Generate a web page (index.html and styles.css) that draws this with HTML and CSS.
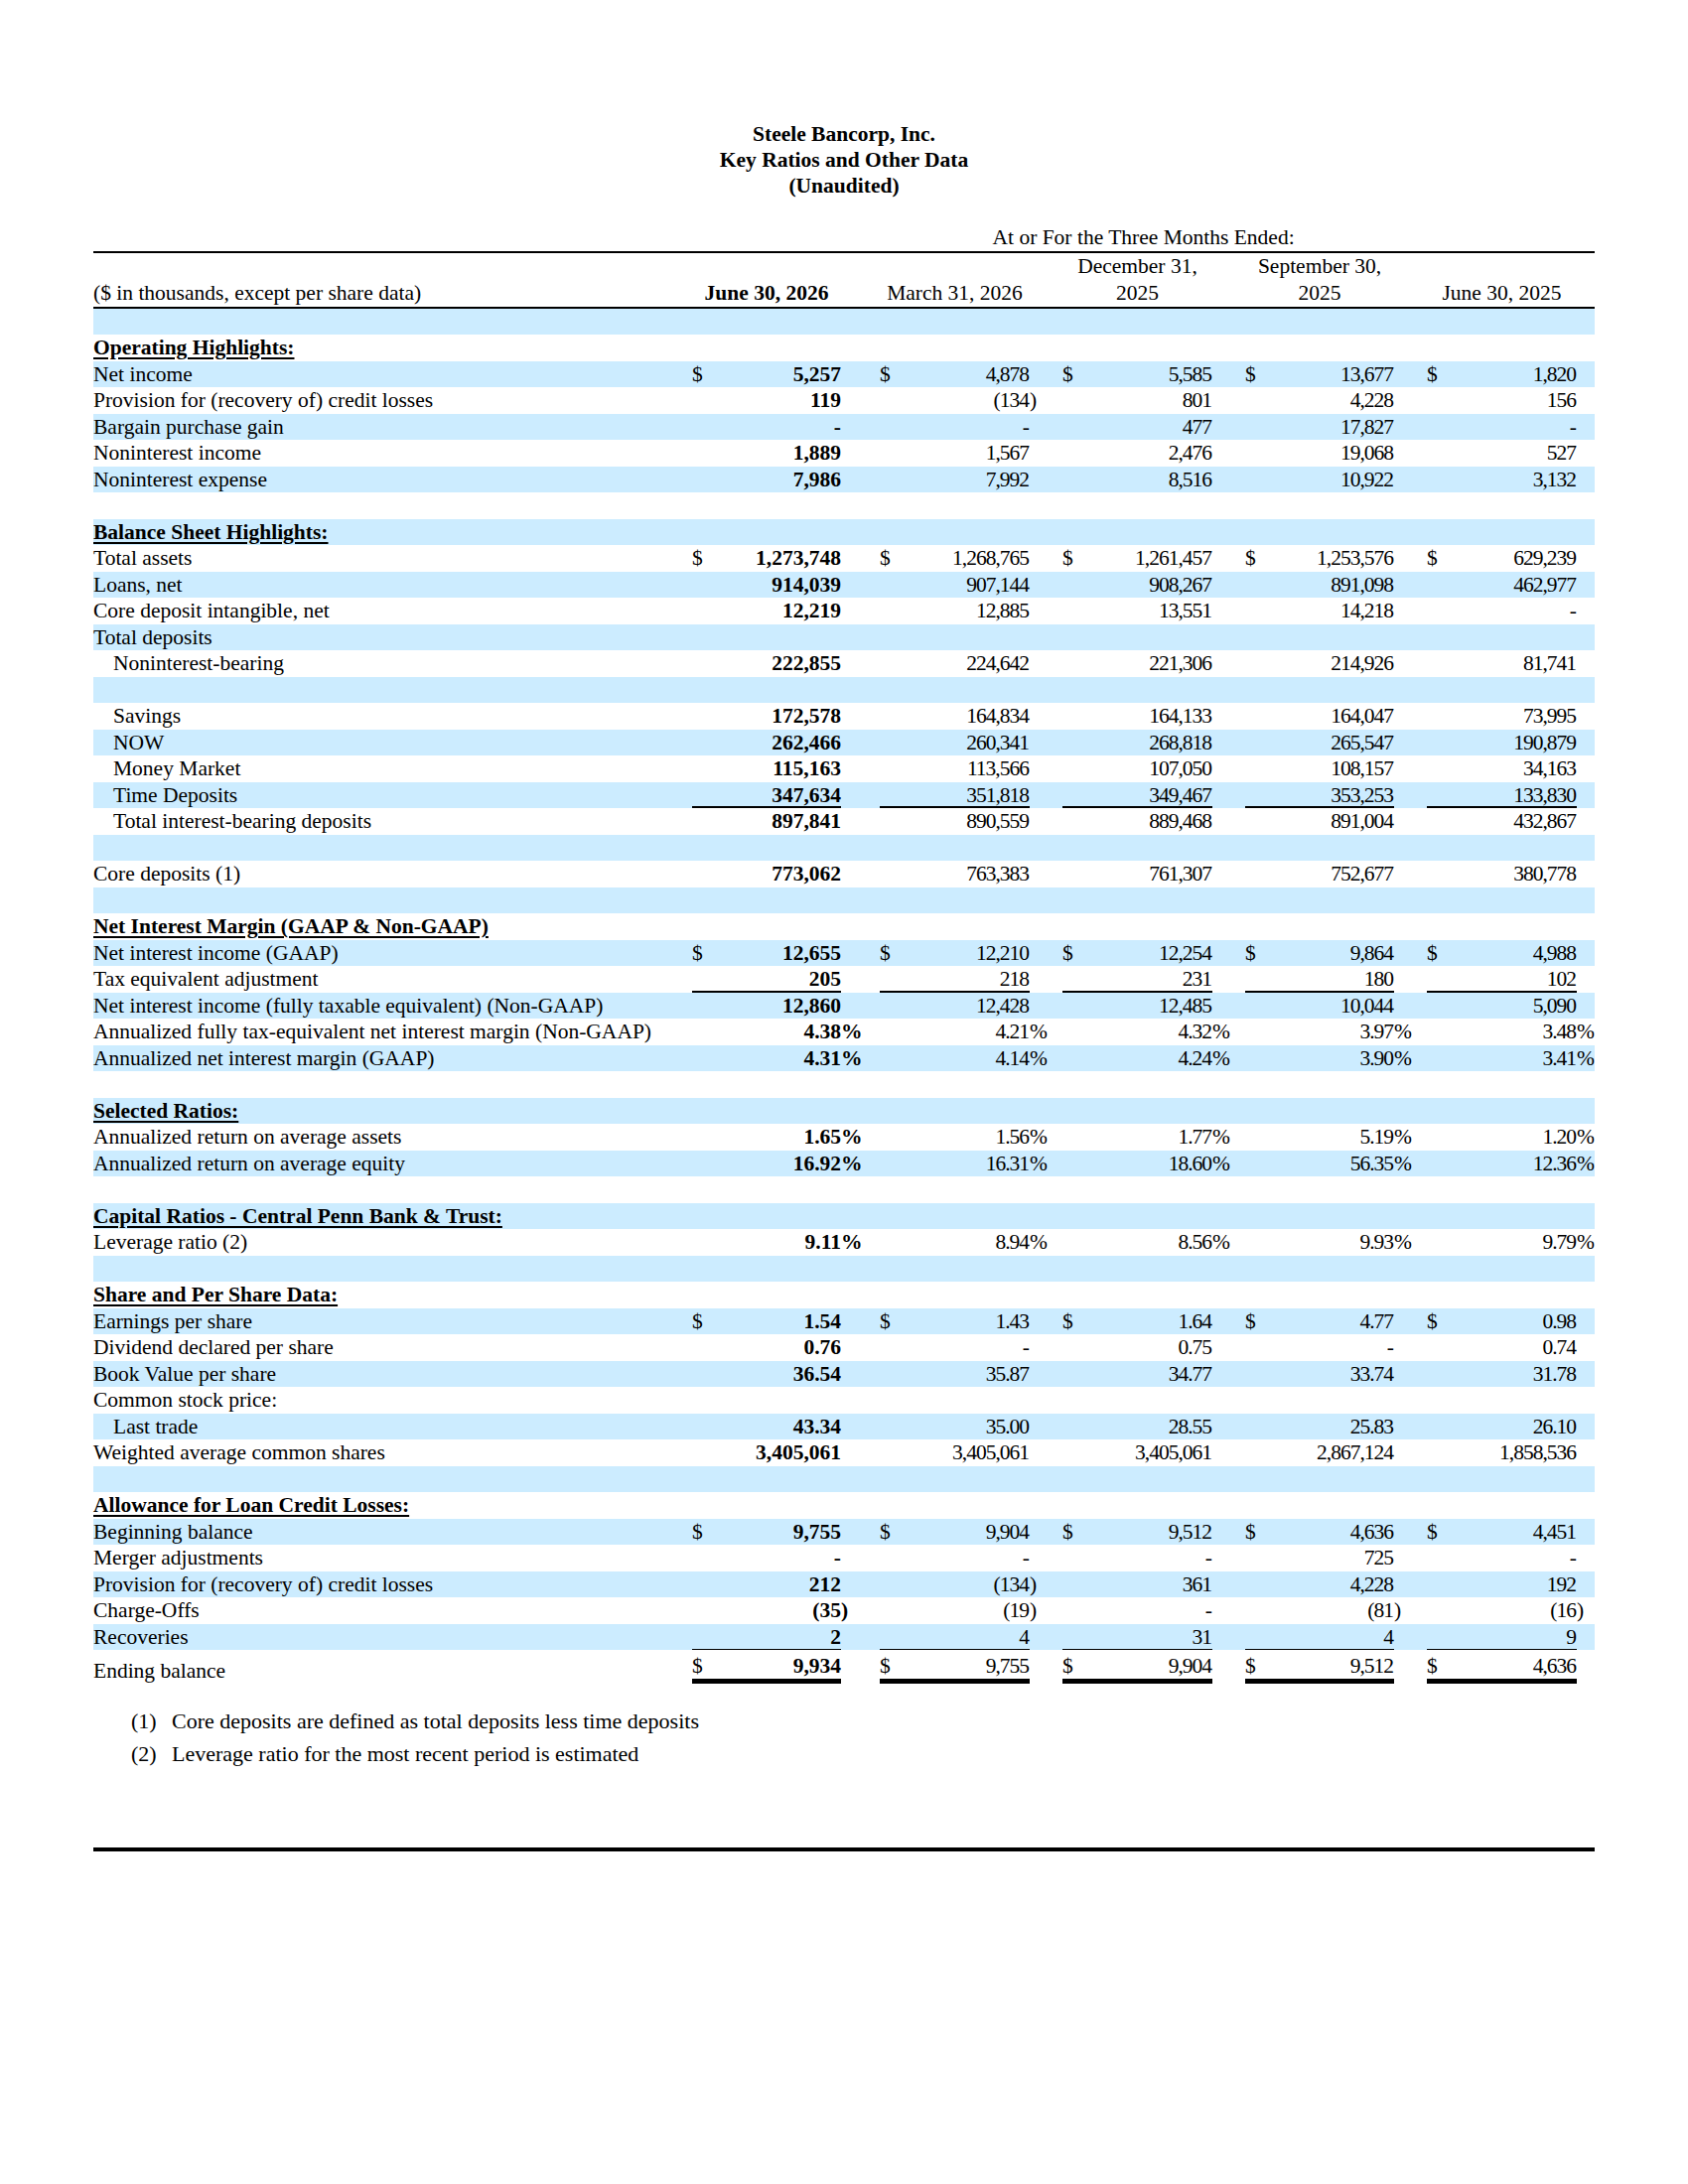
FILE: index.html
```html
<!DOCTYPE html>
<html lang="en">
<head>
    <meta charset="UTF-8">
    <title>Steele Bancorp, Inc. - Key Ratios and Other Data</title>
    <link rel="stylesheet" href="styles.css">
</head>
<body>
    <div class="page">
        <div class="title">
            <div>Steele Bancorp, Inc.</div>
            <div>Key Ratios and Other Data</div>
            <div>(Unaudited)</div>
        </div>

        <table class="ratios">
            <colgroup>
                <col class="c-label">
                <col class="c-dol"><col class="c-val"><col class="c-gap1">
                <col class="c-dol"><col class="c-val2"><col class="c-gap">
                <col class="c-dol"><col class="c-val2"><col class="c-gap">
                <col class="c-dol"><col class="c-val"><col class="c-gap">
                <col class="c-dol"><col class="c-val2"><col class="c-gap5">
            </colgroup>
            <thead>
                <tr class="period">
                    <th></th>
                    <th colspan="15">At or For the Three Months Ended:</th>
                </tr>
                <tr class="dates">
                    <th></th>
                    <th colspan="2"></th><th></th>
                    <th colspan="2"></th><th></th>
                    <th colspan="2">December 31,</th><th></th>
                    <th colspan="2">September 30,</th><th></th>
                    <th colspan="2"></th><th></th>
                </tr>
                <tr class="dates last">
                    <th class="lbl">($ in thousands, except per share data)</th>
                    <th colspan="2" class="cur">June 30, 2026</th><th></th>
                    <th colspan="2">March 31, 2026</th><th></th>
                    <th colspan="2">2025</th><th></th>
                    <th colspan="2">2025</th><th></th>
                    <th colspan="2">June 30, 2025</th><th></th>
                </tr>
            </thead>
            <tbody id="rows">
                <!-- rows are built from the data below -->
            </tbody>
        </table>

        <div class="notes">
            <div class="note"><span class="note-num">(1)</span><span>Core deposits are defined as total deposits less time deposits</span></div>
            <div class="note"><span class="note-num">(2)</span><span>Leverage ratio for the most recent period is estimated</span></div>
        </div>

        <div class="rule"></div>
    </div>

    <script>
        // type: b = blank, h = section heading, r = row, i = indented row
        // flags: $ = dollar signs, u = underline, t = thin underline, e = ending balance
        const data = [
            ['b'],
            ['h', 'Operating Highlights:'],
            ['r', 'Net income', '$', '5,257 4,878 5,585 13,677 1,820'],
            ['r', 'Provision for (recovery of) credit losses', '', '119 (134) 801 4,228 156'],
            ['r', 'Bargain purchase gain', '', '- - 477 17,827 -'],
            ['r', 'Noninterest income', '', '1,889 1,567 2,476 19,068 527'],
            ['r', 'Noninterest expense', '', '7,986 7,992 8,516 10,922 3,132'],
            ['b'],
            ['h', 'Balance Sheet Highlights:'],
            ['r', 'Total assets', '$', '1,273,748 1,268,765 1,261,457 1,253,576 629,239'],
            ['r', 'Loans, net', '', '914,039 907,144 908,267 891,098 462,977'],
            ['r', 'Core deposit intangible, net', '', '12,219 12,885 13,551 14,218 -'],
            ['r', 'Total deposits', '', ''],
            ['i', 'Noninterest-bearing', '', '222,855 224,642 221,306 214,926 81,741'],
            ['b'],
            ['i', 'Savings', '', '172,578 164,834 164,133 164,047 73,995'],
            ['i', 'NOW', '', '262,466 260,341 268,818 265,547 190,879'],
            ['i', 'Money Market', '', '115,163 113,566 107,050 108,157 34,163'],
            ['i', 'Time Deposits', 'u', '347,634 351,818 349,467 353,253 133,830'],
            ['i', 'Total interest-bearing deposits', '', '897,841 890,559 889,468 891,004 432,867'],
            ['b'],
            ['r', 'Core deposits (1)', '', '773,062 763,383 761,307 752,677 380,778'],
            ['b'],
            ['h', 'Net Interest Margin (GAAP & Non-GAAP)'],
            ['r', 'Net interest income (GAAP)', '$', '12,655 12,210 12,254 9,864 4,988'],
            ['r', 'Tax equivalent adjustment', 'u', '205 218 231 180 102'],
            ['r', 'Net interest income (fully taxable equivalent) (Non-GAAP)', '', '12,860 12,428 12,485 10,044 5,090'],
            ['r', 'Annualized fully tax-equivalent net interest margin (Non-GAAP)', '', '4.38% 4.21% 4.32% 3.97% 3.48%'],
            ['r', 'Annualized net interest margin (GAAP)', '', '4.31% 4.14% 4.24% 3.90% 3.41%'],
            ['b'],
            ['h', 'Selected Ratios:'],
            ['r', 'Annualized return on average assets', '', '1.65% 1.56% 1.77% 5.19% 1.20%'],
            ['r', 'Annualized return on average equity', '', '16.92% 16.31% 18.60% 56.35% 12.36%'],
            ['b'],
            ['h', 'Capital Ratios - Central Penn Bank & Trust:'],
            ['r', 'Leverage ratio (2)', '', '9.11% 8.94% 8.56% 9.93% 9.79%'],
            ['b'],
            ['h', 'Share and Per Share Data:'],
            ['r', 'Earnings per share', '$', '1.54 1.43 1.64 4.77 0.98'],
            ['r', 'Dividend declared per share', '', '0.76 - 0.75 - 0.74'],
            ['r', 'Book Value per share', '', '36.54 35.87 34.77 33.74 31.78'],
            ['r', 'Common stock price:', '', ''],
            ['i', 'Last trade', '', '43.34 35.00 28.55 25.83 26.10'],
            ['r', 'Weighted average common shares', '', '3,405,061 3,405,061 3,405,061 2,867,124 1,858,536'],
            ['b'],
            ['h', 'Allowance for Loan Credit Losses:'],
            ['r', 'Beginning balance', '$', '9,755 9,904 9,512 4,636 4,451'],
            ['r', 'Merger adjustments', '', '- - - 725 -'],
            ['r', 'Provision for (recovery of) credit losses', '', '212 (134) 361 4,228 192'],
            ['r', 'Charge-Offs', '', '(35) (19) - (81) (16)'],
            ['r', 'Recoveries', 't', '2 4 31 4 9'],
            ['r', 'Ending balance', '$e', '9,934 9,755 9,904 9,512 4,636']
        ];

        const tbody = document.getElementById('rows');

        // split "(134)" and "4.38%" so the closing mark hangs past the column
        function splitValue(v) {
            if (v.startsWith('(') || v.endsWith('%')) {
                return [v.slice(0, -1), v.slice(-1)];
            }
            return [v, ''];
        }

        function addCell(tr, text, cls) {
            const td = document.createElement('td');
            td.textContent = text;
            if (cls) td.className = cls;
            tr.appendChild(td);
            return td;
        }

        data.forEach(function(row) {
            const type = row[0];
            const flags = row[2] || '';
            const values = row[3] ? row[3].split(' ') : [];
            const tr = document.createElement('tr');

            if (type === 'b') {
                addCell(tr, '').colSpan = 16;
                tbody.appendChild(tr);
                return;
            }
            if (type === 'h') {
                const td = addCell(tr, '', 'lbl');
                td.colSpan = 16;
                const span = document.createElement('span');
                span.className = 'section';
                span.textContent = row[1];
                td.appendChild(span);
                tbody.appendChild(tr);
                return;
            }

            addCell(tr, row[1], type === 'i' ? 'lbl indent' : 'lbl');

            let line = '';
            if (flags.includes('u')) line = ' ul';
            if (flags.includes('t')) line = ' ul-thin';
            if (flags.includes('e')) {
                line = ' ul-double';
                tr.className = 'end';
            }

            for (let i = 0; i < 5; i++) {
                const parts = values.length ? splitValue(values[i]) : ['', ''];
                const weight = i === 0 ? ' cur' : ' prior';
                addCell(tr, flags.includes('$') ? '$' : '', 'dol' + line);
                addCell(tr, parts[0], 'val' + weight + line);
                addCell(tr, parts[1], 'sfx' + weight);
            }
            tbody.appendChild(tr);
        });
    </script>
</body>
</html>
```

FILE: styles.css
```css
body {
    margin: 0;
    background-color: #fff;
    color: #000;
    font-family: "Liberation Serif", "Times New Roman", serif;
    font-size: 21.5px;
}
.page {
    width: 1512px;
    margin: 0 auto;
    padding-top: 122px;
}
.title {
    text-align: center;
    font-weight: bold;
    line-height: 26px;
    margin-bottom: 26px;
}

/* table */
.ratios {
    width: 1512px;
    table-layout: fixed;
    border-collapse: separate;
    border-spacing: 0;
}
.c-label { width: 603px; }
.c-dol { width: 22px; }
.c-val { width: 128px; }
.c-val2 { width: 129px; }
.c-gap1 { width: 39px; }
.c-gap { width: 33px; }
.c-gap5 { width: 18px; }

.ratios th, .ratios td {
    padding: 0;
    white-space: nowrap;
    line-height: 26.5px;
    font-weight: normal;
}
.ratios thead th {
    text-align: center;
}
.period th {
    border-bottom: 2px solid #000;
}
.dates th {
    line-height: 27px;
}
.dates.last th {
    border-bottom: 2px solid #000;
}
.ratios thead th.lbl {
    text-align: left;
}
.ratios thead th.cur {
    font-weight: bold;
}

.ratios tbody tr {
    height: 26.5px;
}
.ratios tbody tr:nth-child(odd) {
    background-color: #ccecff;
}
.lbl {
    text-align: left;
}
.indent {
    padding-left: 20px !important;
}
.section {
    font-weight: bold;
    text-decoration: underline;
    text-decoration-thickness: 1.5px;
    text-underline-offset: 3px;
}
.dol {
    text-align: left;
}
.val {
    text-align: right;
}
.sfx {
    text-align: left;
}
.cur {
    font-weight: bold !important;
}
.prior {
    letter-spacing: -1px;
}
.val.prior {
    padding-right: 1px !important;
}

/* rules under totals */
.ul {
    box-shadow: inset 0 -2px 0 #000;
}
.ul-thin {
    box-shadow: inset 0 -1px 0 #000;
}
.ul-double {
    box-shadow: inset 0 -5px 0 #000;
}
.ratios tbody tr.end {
    height: 34px;
}
.end td {
    vertical-align: top;
    padding-top: 2.5px;
}
.end td.lbl {
    vertical-align: bottom;
    padding-top: 0;
    padding-bottom: 0;
}

/* footnotes */
.notes {
    margin-top: 20.5px;
    padding-left: 38px;
    font-size: 22px;
    line-height: 33px;
}
.note {
    display: flex;
}
.note-num {
    width: 41px;
}
.rule {
    margin-top: 78px;
    border-top: 4px solid #000;
}
```
